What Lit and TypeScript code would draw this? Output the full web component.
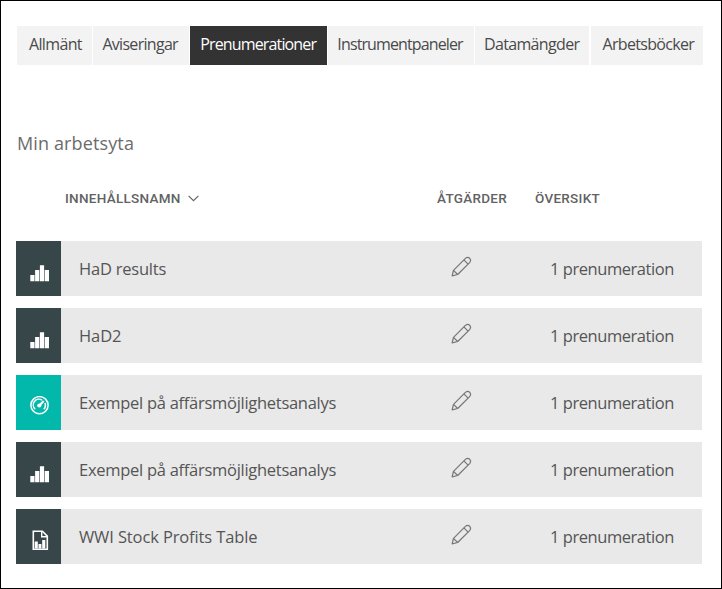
import { LitElement, html, css, svg } from "lit";
import { customElement, property } from "lit/decorators.js";
import { classMap } from "lit/directives/class-map.js";

type Kind = "report" | "dashboard" | "workbook";

interface Item {
  name: string;
  kind: Kind;
  cls: string;
}

const TABS = [
  { label: "Allmänt", cls: "t1" },
  { label: "Aviseringar", cls: "t2" },
  { label: "Prenumerationer", cls: "t3" },
  { label: "Instrumentpaneler", cls: "t4" },
  { label: "Datamängder", cls: "t5" },
  { label: "Arbetsböcker", cls: "t6" },
];

const ITEMS: Item[] = [
  { name: "HaD results", kind: "report", cls: "n1" },
  { name: "HaD2", kind: "report", cls: "n2" },
  { name: "Exempel på affärsmöjlighetsanalys", kind: "dashboard", cls: "n3" },
  { name: "Exempel på affärsmöjlighetsanalys", kind: "report", cls: "n3" },
  { name: "WWI Stock Profits Table", kind: "workbook", cls: "n5" },
];

const ICONS = {
  report: svg`
    <path fill="#fff" d="M0.3 12.9h4.2v6.3H0.3zM5.1 8.1h4.2v11.1H5.1zM9.9 3.2h4.2v16H9.9zM14.7 8.1h4.3v11.1h-4.3z"/>`,
  dashboard: svg`
    <g fill="none" stroke="#fff">
      <circle cx="9.5" cy="9.2" r="8.6" stroke-width="1.5"/>
      <path d="M5.2 13.2A5.7 5.7 0 0 1 12 4.1M14.9 7A5.7 5.7 0 0 1 13.8 13.2" stroke-width="1.5"/>
      <path d="M9.6 9.2L13.7 5" stroke-width="2"/>
    </g>
    <circle cx="9.3" cy="9.5" r="2.1" fill="#fff"/>`,
  workbook: svg`
    <path fill="none" stroke="#fff" stroke-width="1.6" d="M3.3 1.3h9.1l4.9 4.9v13H3.3z"/>
    <path fill="none" stroke="#fff" stroke-width="1.4" d="M11.7 1.6v5.2h5.3"/>
    <path fill="#fff" d="M4.7 11.6h3.1v6.9H4.7zM8.5 14h2.9v4.5H8.5zM12.2 10h3.1v8.5h-3.1z"/>`,
};

@customElement("subscription-row")
export class SubscriptionRow extends LitElement {
  @property({ attribute: false }) item!: Item;

  static styles = css`
    :host {
      display: grid;
      grid-template-columns: 45px 374px 99px 1fr;
      align-items: center;
      height: 55px;
      background: #e9e9e9;
      color: #555;
      font: 400 16.5px/24px "Open Sans", "Noto Sans", sans-serif;
      white-space: nowrap;
    }
    .tile {
      display: grid;
      place-items: center;
      height: 55px;
      box-sizing: border-box;
      padding: 6px 0 0 2px;
      background: #374649;
    }
    .tile.dashboard { background: #01b8aa; }
    .kind { width: 19px; height: 20px; display: block; }
    .name { padding-left: 18px; }
    .n1 { letter-spacing: -0.22px; }
    .n2 { letter-spacing: -0.1px; }
    .n3 { letter-spacing: -0.28px; }
    .n5 { letter-spacing: -0.12px; }
    .pen { width: 21px; height: 21px; display: block; margin: -4px 0 0 16px; }
    .count { padding-left: 16px; letter-spacing: -0.45px; }
  `;

  render() {
    const { name, kind, cls } = this.item;
    return html`
      <div class=${classMap({ tile: true, [kind]: true })}>
        <svg class="kind" viewBox="0 0 19 20">${ICONS[kind]}</svg>
      </div>
      <div class="name"><span class=${cls}>${name}</span></div>
      <svg class="pen" viewBox="0 0 22 22" fill="none" stroke="#777" stroke-width="1.3" stroke-linejoin="round">
        <path d="M1.2 20.8L2.6 15L15.1 2.5Q17.5 .5 19.6 2.4Q21.5 4.6 19.5 6.9L7 19.4Z"/>
        <path d="M13.5 4.1L17.9 8.5M2.6 15L7 19.4"/>
      </svg>
      <div class="count">1 prenumeration</div>
    `;
  }
}

@customElement("app-root")
export class AppRoot extends LitElement {
  static styles = css`
    :host {
      display: block;
      box-sizing: border-box;
      width: 722px;
      height: 589px;
      border: 1px solid #000;
      padding: 25px 19px 0 15px;
      background: #fff;
      overflow: hidden;
      white-space: nowrap;
      font-family: "Open Sans", "Noto Sans", sans-serif;
    }
    .tabs {
      display: grid;
      grid-template-columns: 75px 95.4px 136.8px 145.2px 114.2px 112px;
      column-gap: 1.4px;
      margin-left: 1px;
      height: 38.5px;
      font-size: 16px;
      line-height: 37px;
      color: #4a4a4a;
    }
    .tab { background: #f3f3f3; box-sizing: border-box; }
    .tab.active { background: #333; color: #fff; }
    .t1 { letter-spacing: -0.65px; padding-left: 12px; }
    .t2 { letter-spacing: -0.7px; padding-left: 9px; }
    .t3 { letter-spacing: -0.85px; padding-left: 10px; }
    .t4 { letter-spacing: -0.88px; padding-left: 9px; }
    .t5 { letter-spacing: -0.65px; padding-left: 9px; }
    .t6 { letter-spacing: -0.67px; padding-left: 12px; }
    .title {
      margin: 64.5px 0 0 1px;
      font-size: 18px;
      line-height: 28px;
      color: #6c6c6c;
      letter-spacing: 0.13px;
    }
    .head {
      display: grid;
      grid-template-columns: 372px 98px 1fr;
      margin-top: 31px;
      padding-left: 49px;
      font: 500 13.5px/20px Roboto, sans-serif;
      color: #626262;
      letter-spacing: 0.28px;
    }
    .sort { display: flex; align-items: center; gap: 7px; }
    .chevron { width: 11px; height: 7px; }
    .rows {
      display: grid;
      row-gap: 12px;
      margin-top: 33px;
    }
  `;

  render() {
    return html`
      <div class="tabs">
        ${TABS.map(
          (t, i) => html`<div class=${classMap({ tab: true, active: i === 2, [t.cls]: true })}>${t.label}</div>`
        )}
      </div>
      <div class="title">Min arbetsyta</div>
      <div class="head">
        <div class="sort">
          <span>INNEHÅLLSNAMN</span>
          <svg class="chevron" viewBox="0 0 11 7" fill="none" stroke="#666" stroke-width="1.2"><path d="M.6 .9L5.5 5.7L10.4 .9"/></svg>
        </div>
        <div>ÅTGÄRDER</div>
        <div>ÖVERSIKT</div>
      </div>
      <div class="rows">
        ${ITEMS.map((item) => html`<subscription-row .item=${item}></subscription-row>`)}
      </div>
    `;
  }
}
